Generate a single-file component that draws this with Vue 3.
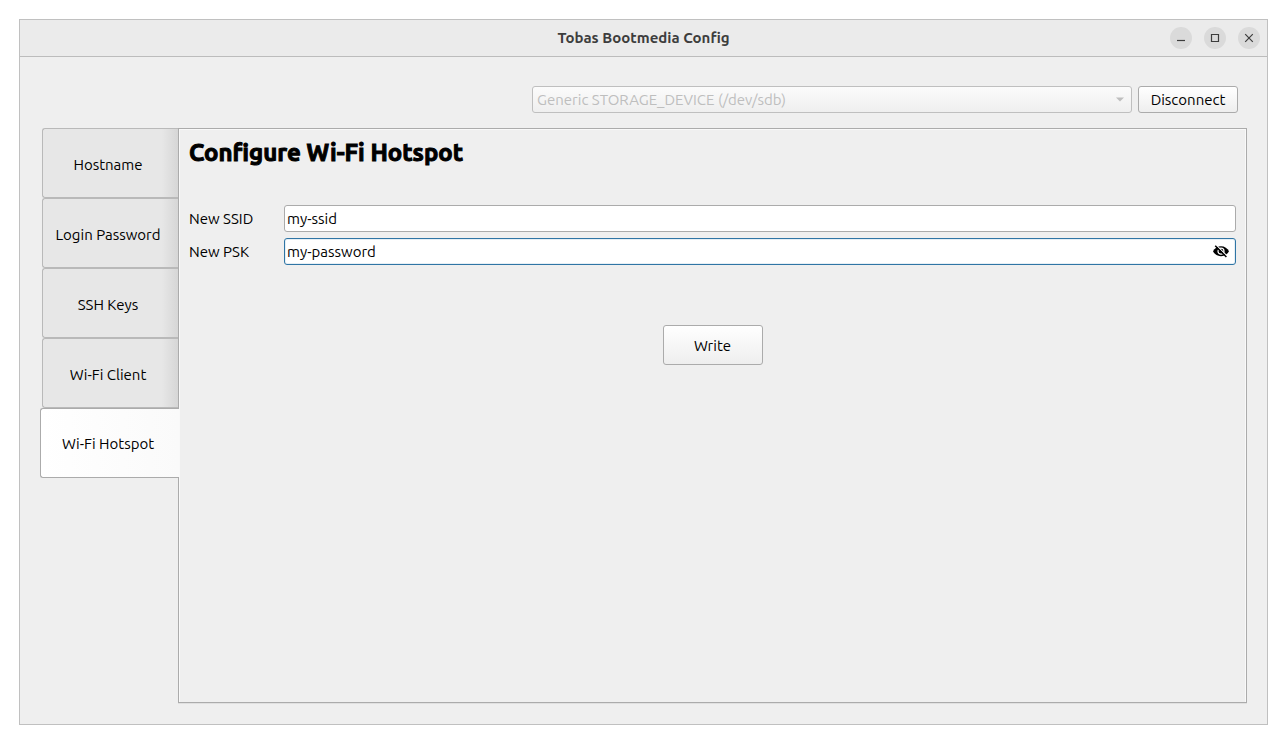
<script setup>
import { ref } from 'vue'

const tabs = ['Hostname', 'Login Password', 'SSH Keys', 'Wi-Fi Client', 'Wi-Fi Hotspot']
const active = ref('Wi-Fi Hotspot')
const device = ref('Generic STORAGE_DEVICE (/dev/sdb)')
const ssid = ref('my-ssid')
const psk = ref('my-password')
const visible = ref(true)
</script>

<template>
  <div class="desktop">
    <div class="window">
      <header class="titlebar">
        <div class="title">Tobas Bootmedia Config</div>
        <div class="controls">
          <button type="button" class="control" aria-label="Minimize">
            <svg viewBox="0 0 22 22"><path d="M7 13.5h8" /></svg>
          </button>
          <button type="button" class="control" aria-label="Maximize">
            <svg viewBox="0 0 22 22"><path d="M7.5 7.5h7v7h-7z" /></svg>
          </button>
          <button type="button" class="control" aria-label="Close">
            <svg viewBox="0 0 22 22"><path d="M7.2 7.2l7.6 7.6M14.8 7.2l-7.6 7.6" /></svg>
          </button>
        </div>
      </header>

      <main class="content">
        <div class="toolbar">
          <div class="combo">
            <select v-model="device" aria-label="Device" disabled>
              <option>Generic STORAGE_DEVICE (/dev/sdb)</option>
            </select>
            <svg class="arrow" viewBox="0 0 8 5"><path d="M0 0.5h8l-4 4z" /></svg>
          </div>
          <button type="button" class="button">Disconnect</button>
        </div>

        <div class="tabs">
          <div class="tablist" role="tablist" aria-orientation="vertical">
            <button
              v-for="tab in tabs"
              :key="tab"
              type="button"
              role="tab"
              class="tab"
              :class="{ selected: tab === active }"
              :aria-selected="tab === active"
              @click="active = tab"
            >{{ tab }}</button>
          </div>

          <section class="pane" role="tabpanel">
            <h1>Configure Wi-Fi Hotspot</h1>
            <form class="form" @submit.prevent>
              <label for="ssid">New SSID</label>
              <div class="field">
                <input id="ssid" v-model="ssid" type="text" />
              </div>
              <label for="psk">New PSK</label>
              <div class="field focused">
                <input id="psk" v-model="psk" :type="visible ? 'text' : 'password'" />
                <button type="button" class="eye" aria-label="Toggle password visibility" @click="visible = !visible">
                  <svg viewBox="0 0 18 18" fill="none">
                    <path d="M1 8.2C2.5 5.2 5.5 3.2 9 3.2s6.5 2 8 5c-1.5 3-4.5 5-8 5s-6.5-2-8-5z" fill="#000000" />
                    <circle cx="9" cy="8.2" r="3" stroke="#ffffff" stroke-width="1.2" />
                    <path d="M4.3 2.2l11.2 11.2" stroke="#ffffff" stroke-width="1.2" />
                    <path d="M3.2 2.8l11.2 11.2" stroke="#000000" stroke-width="1.5" />
                  </svg>
                </button>
              </div>
              <button type="submit" class="button write">Write</button>
            </form>
          </section>
        </div>
      </main>
    </div>
  </div>
</template>

<style>
body {
  background: #ffffff;
}
</style>

<style scoped>
.desktop {
  box-sizing: border-box;
  display: flex;
  min-height: 100vh;
  padding: 19px;
  color: #000000;
  font-family: Ubuntu, "Noto Sans", "Open Sans", sans-serif;
  font-size: 15px;
  line-height: 20px;
}

button,
input,
select {
  box-sizing: border-box;
  margin: 0;
  color: inherit;
  font: inherit;
}

.window {
  display: flex;
  flex: 1;
  flex-direction: column;
  border: 1px solid #c0c0c0;
  background: #efefef;
}

.titlebar {
  display: grid;
  grid-template-columns: 1fr auto 1fr;
  align-items: center;
  height: 36px;
  padding: 0 7px;
  border-bottom: 1px solid #bcbcbc;
  background: #ebebeb;
}

.title {
  grid-column: 2;
  color: #3d3d3d;
  font-weight: bold;
}

.controls {
  display: flex;
  justify-content: flex-end;
  gap: 12px;
}

.control {
  width: 22px;
  height: 22px;
  padding: 0;
  border: 0;
  border-radius: 50%;
  background: #dadada;
}

.control svg {
  display: block;
  fill: none;
  stroke: #3d3d3d;
  stroke-width: 1.2;
}

.content {
  display: flex;
  flex: 1;
  flex-direction: column;
  gap: 15px;
  padding: 29px 20px 21px;
}

.toolbar {
  display: flex;
  justify-content: flex-end;
  gap: 6px;
  padding-right: 9px;
}

.combo {
  position: relative;
  width: 600px;
}

.combo select {
  display: block;
  width: 100%;
  height: 27px;
  padding: 0 24px 0 4px;
  border: 1px solid #bfbfbf;
  border-radius: 3px;
  appearance: none;
  background: linear-gradient(#fbfbfb, #efefef);
  color: #bebebe;
  opacity: 1;
}

.arrow {
  position: absolute;
  top: 11px;
  right: 8px;
  width: 8px;
  height: 5px;
  fill: #bebebe;
}

.button {
  width: 100px;
  height: 27px;
  padding: 0;
  border: 1px solid #ababab;
  border-radius: 3px;
  background: linear-gradient(#ffffff, #eeeeee);
}

.tabs {
  display: flex;
  flex: 1;
}

.tablist {
  z-index: 1;
  display: flex;
  flex-direction: column;
  width: 139px;
  margin-right: -1px;
}

.tab {
  height: 70px;
  margin: 0 1px 0 2px;
  padding: 3px 5px 0 0;
  border: 1px solid #b9b9b9;
  border-right: 0;
  border-radius: 3px 0 0 3px;
  background: linear-gradient(to right, #e7e7e7 88%, #d6d6d6);
}

.tab.selected {
  margin: 0;
  padding: 1px 4px 0 0;
  border-color: #ababab;
  background: linear-gradient(to right, #ffffff, #fafafa);
}

.pane {
  flex: 1;
  padding: 9px 10px;
  border: 1px solid #ababab;
  box-shadow: inset 1px 1px #f9f9f9, inset -1px 0 #f9f9f9, 0 1px #e0e0e0;
}

h1 {
  margin: 0 0 37px;
  font-size: 24px;
  font-weight: bold;
  line-height: 30px;
  -webkit-text-stroke: 1px #000000;
}

.form {
  display: grid;
  grid-template-columns: 89px 1fr;
  align-items: center;
  gap: 6px;
}

.field {
  position: relative;
}

.field input {
  display: block;
  width: 100%;
  height: 27px;
  padding: 0 28px 0 2px;
  border: 1px solid #ababab;
  border-radius: 3px;
  outline: 0;
  background: #ffffff;
}

.field.focused input {
  border-color: #2f75a5;
  box-shadow: inset 0 0 0 1px #e6eff5;
}

.eye {
  position: absolute;
  top: 5px;
  right: 6px;
  width: 18px;
  height: 18px;
  padding: 0;
  border: 0;
  background: none;
}

.eye svg {
  display: block;
}

.write {
  grid-column: 1 / -1;
  justify-self: center;
  height: 40px;
  margin-top: 54px;
  padding-top: 2px;
}
</style>
